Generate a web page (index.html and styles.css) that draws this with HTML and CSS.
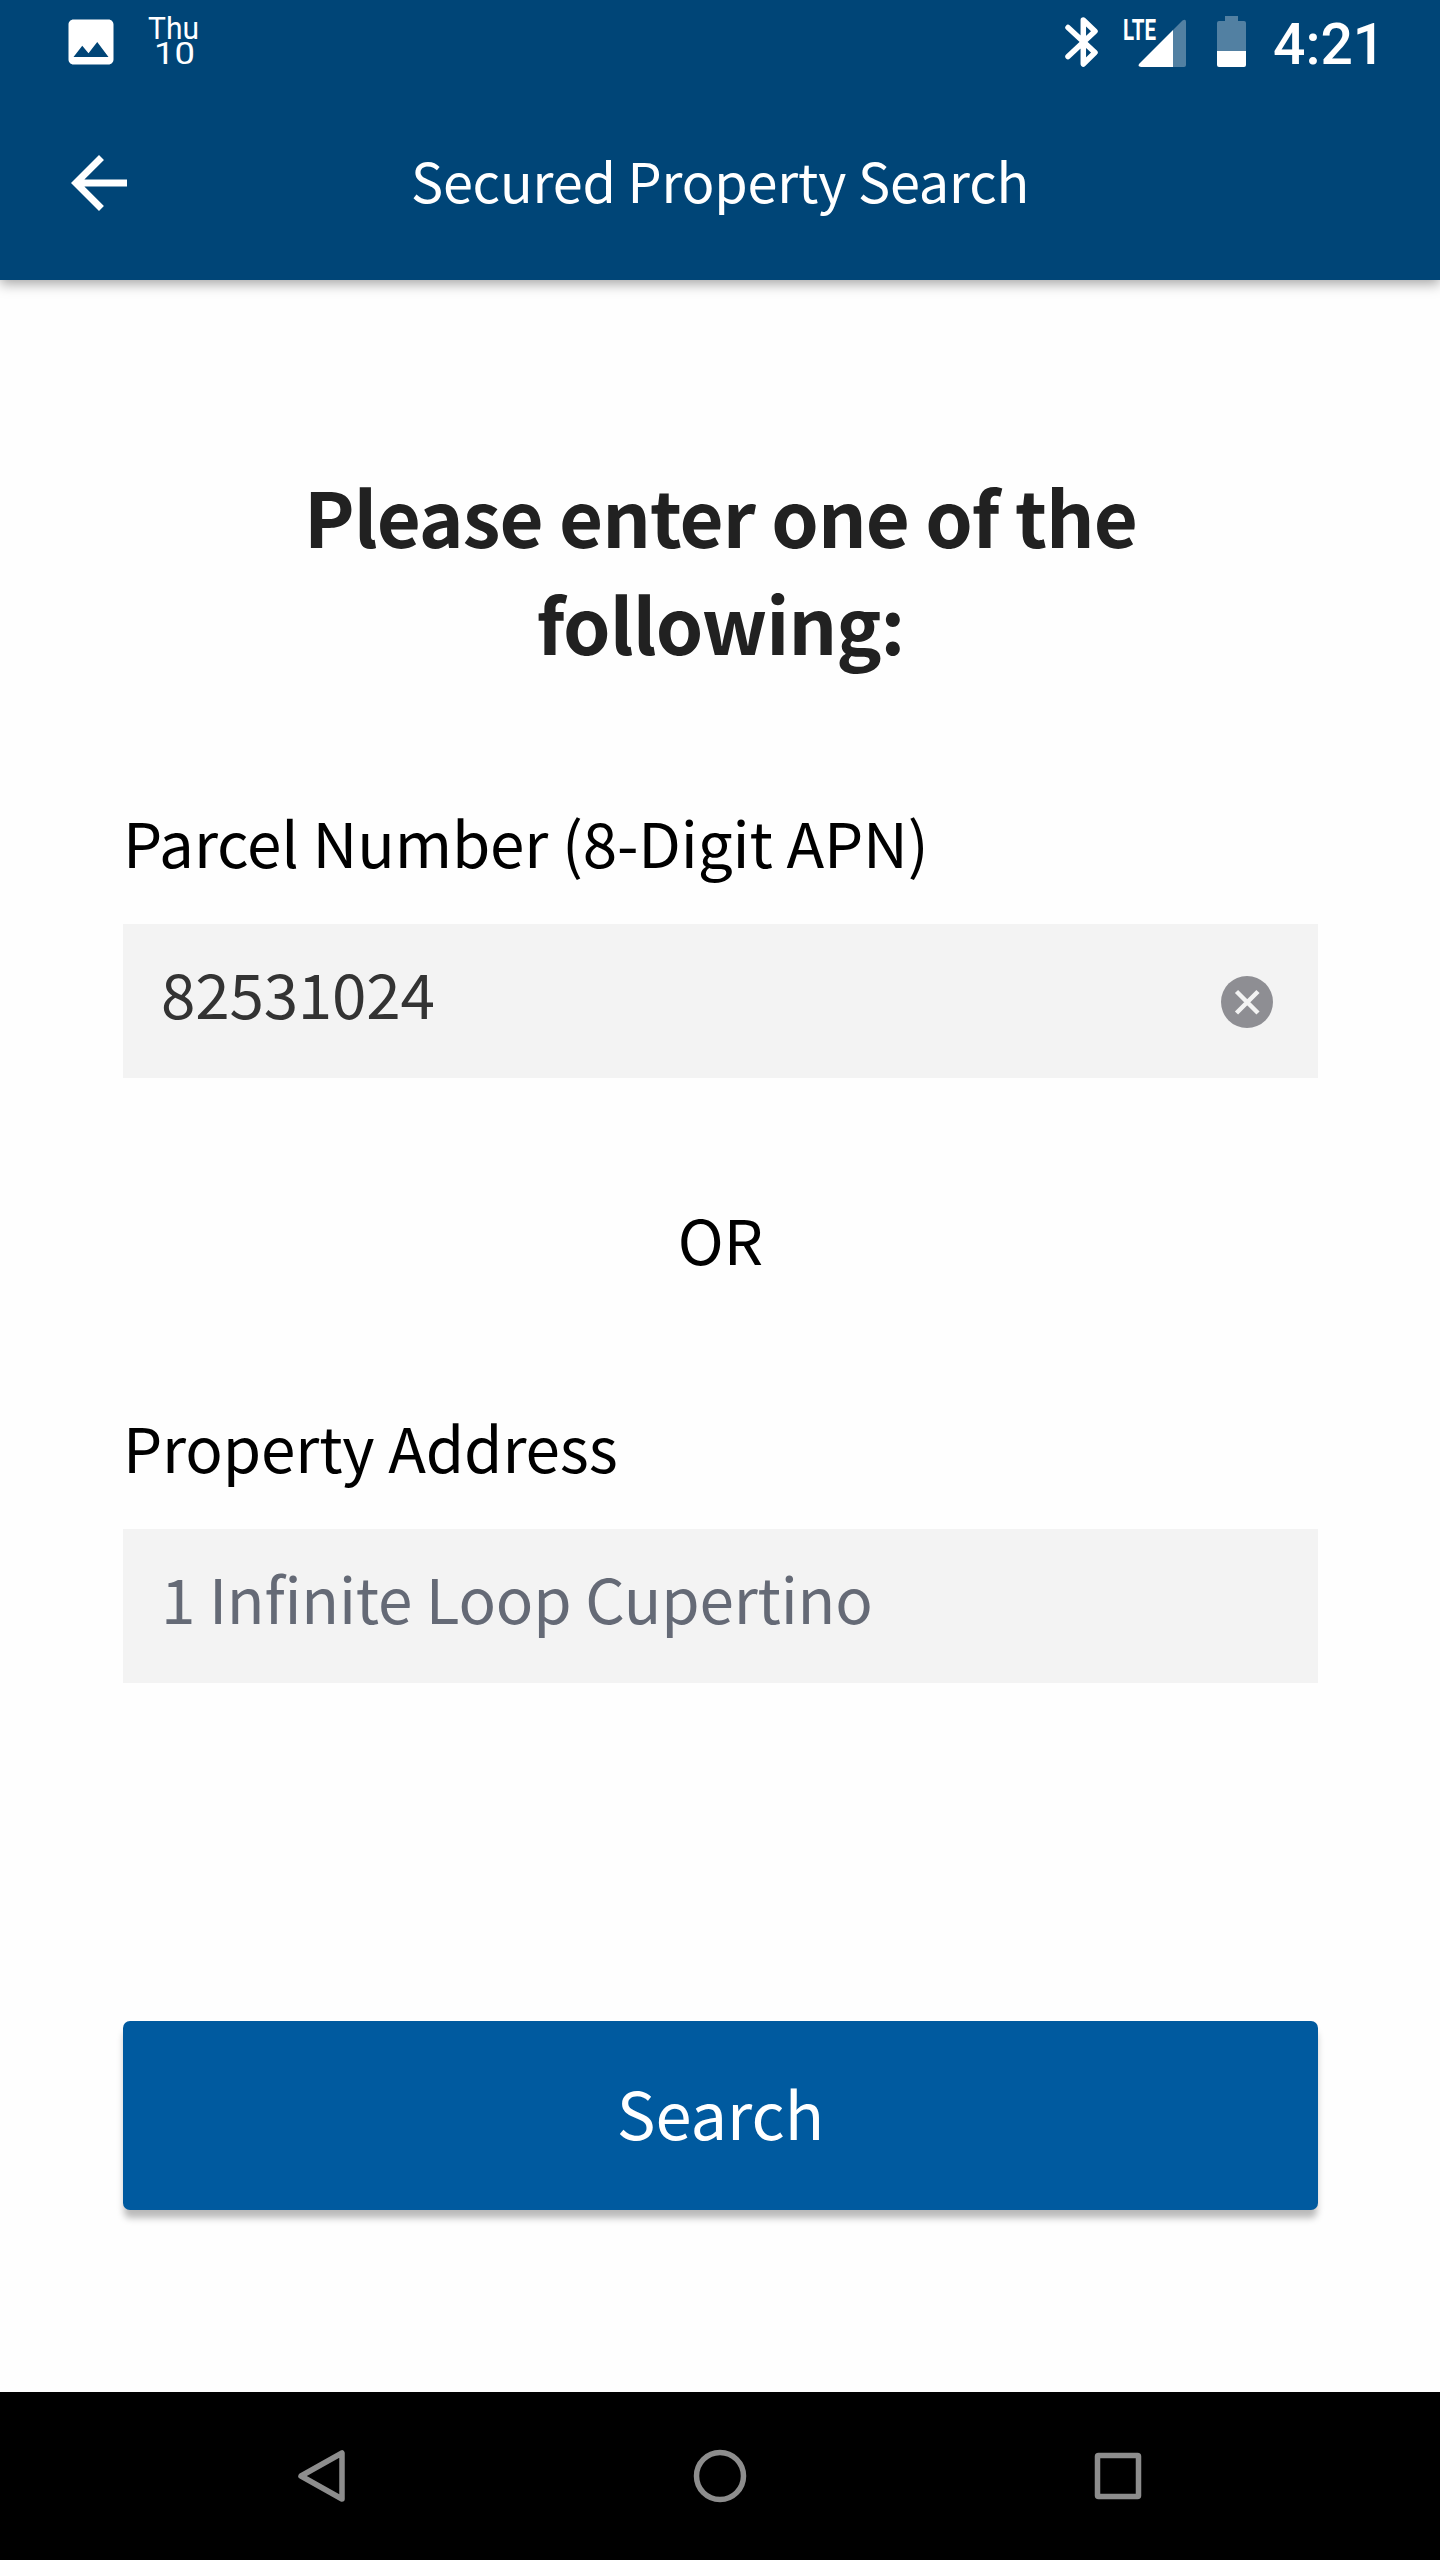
FILE: index.html
```html
<!DOCTYPE html>
<html lang="en">
<head>
  <meta charset="UTF-8">
  <title>Secured Property Search</title>
  <meta name="viewport" content="width=device-width, initial-scale=1.0">
  <link rel="stylesheet" href="styles.css">
</head>
<body>
  <header class="header">
    <div class="status-bar">
      <svg class="photo-icon" viewBox="0 0 24 24"><path d="M21 19V5c0-1.100-.9-2-2-2H5c-1.100 0-2 .9-2 2v14c0 1.100.9 2 2 2h14c1.100 0 2-.9 2-2zM8.500 13.500l2.500 3.010L14.500 12l4.500 6H5l3.500-4.500z"/></svg>
      <svg class="date" viewBox="0 0 56 84">
        <text x="0" y="38.500" textLength="51" lengthAdjust="spacingAndGlyphs">Thu</text>
        <text x="6" y="64" textLength="41" lengthAdjust="spacingAndGlyphs">10</text>
      </svg>
      <div class="status-right">
        <svg class="bluetooth" viewBox="0 0 34 84"><path d="M4 27.500L31 52.500 19.300 64V20L31 31.200 4 56.500"/></svg>
        <svg class="signal" viewBox="0 0 64 84">
          <text x="0" y="40" textLength="33" lengthAdjust="spacingAndGlyphs">LTE</text>
          <path class="dim" d="M50 30L59.500 20.500Q63 18.500 63 22V65Q63 67 61 67H50Z"/>
          <path d="M50 30V67H18Q14 66.500 16.500 63.500Z"/>
        </svg>
        <svg class="battery" viewBox="0 0 30 84">
          <path class="dim" d="M8 16H21V21H27Q29 21 29 23V51H0V23Q0 21 2 21H8Z"/>
          <path d="M0 51H29V65Q29 67 27 67H2Q0 67 0 65Z"/>
        </svg>
        <span class="time">4:21</span>
      </div>
    </div>
    <div class="app-bar">
      <svg class="back-arrow" viewBox="0 0 24 24"><path d="M20 11H7.830l5.590-5.590L12 4l-8 8 8 8 1.410-1.410L7.830 13H20v-2z"/></svg>
      <div class="title">Secured Property Search</div>
    </div>
  </header>

  <main class="content">
    <h1>Please enter one of the following:</h1>

    <label for="apn">Parcel Number (8-Digit APN)</label>
    <div class="field">
      <input type="text" id="apn" value="82531024">
      <svg class="clear" viewBox="0 0 52 52"><circle cx="26" cy="26" r="26"/><path d="M15.500 15.500L37 37M37 15.500L15.500 37"/></svg>
    </div>

    <div class="or">OR</div>

    <label for="address">Property Address</label>
    <div class="field">
      <input type="text" id="address" placeholder="1 Infinite Loop Cupertino">
    </div>

    <button class="search-btn">Search</button>
  </main>

  <nav class="nav-bar">
    <svg viewBox="0 0 56 56"><path d="M48 5V51L7 28Z"/></svg>
    <svg viewBox="0 0 56 56"><circle cx="28" cy="28" r="23.500"/></svg>
    <svg viewBox="0 0 56 56"><rect x="7.500" y="7.500" width="41" height="41" rx="1"/></svg>
  </nav>
</body>
</html>
```

FILE: styles.css
```css
* {
  box-sizing: border-box;
}
body {
  margin: 0;
  height: 2560px;
  display: flex;
  flex-direction: column;
  background-color: #fefefe;
  font-family: "Noto Sans CJK JP", "Noto Sans", sans-serif;
  color: #000;
}
svg {
  display: block;
  flex-shrink: 0;
}
.header {
  height: 280px;
  background-color: #004577;
  color: white;
  box-shadow: 0 4px 12px rgba(0,0,0,0.35);
}
.status-bar {
  display: flex;
  height: 84px;
  padding: 0 59px 0 61px;
  fill: white;
}
.photo-icon {
  width: 60px;
  height: 60px;
  margin-top: 12px;
}
.date {
  width: 56px;
  height: 84px;
  margin-left: 27px;
  font: 400 31px "Roboto", sans-serif;
}
.status-right {
  display: flex;
  margin-left: auto;
}
.bluetooth {
  width: 34px;
  height: 84px;
  margin-right: 25px;
  fill: none;
  stroke: white;
  stroke-width: 5.5;
  stroke-linecap: round;
  stroke-linejoin: round;
}
.signal {
  width: 64px;
  height: 84px;
  margin-right: 30px;
  font: 700 30px "Roboto", sans-serif;
}
.battery {
  width: 30px;
  height: 84px;
  margin-right: 26px;
}
.dim {
  opacity: 0.32;
}
.time {
  width: 108px;
  font: 500 57px/90px "Roboto", sans-serif;
}
.app-bar {
  display: grid;
  grid-template-columns: 84px 1fr 84px;
  align-items: center;
  height: 196px;
  padding: 2px 57px 0;
}
.back-arrow {
  width: 84px;
  height: 84px;
  fill: white;
}
.title {
  padding-bottom: 7px;
  text-align: center;
  font-size: 54px;
  letter-spacing: -0.2px;
}
.content {
  display: flex;
  flex-direction: column;
  flex: 1;
  padding: 182px 122px 0 123px;
}
h1 {
  margin: 0 0 120px;
  padding: 0 150px;
  text-align: center;
  font-size: 76px;
  font-weight: 600;
  line-height: 107px;
  letter-spacing: -0.95px;
  color: #212121;
}
label {
  margin-bottom: 38px;
  font-size: 62px;
  line-height: 90px;
  letter-spacing: -0.15px;
}
.field {
  display: flex;
  align-items: center;
  height: 154px;
  padding: 0 45px 0 38px;
  background-color: #f3f3f3;
}
.field input {
  flex: 1;
  min-width: 0;
  height: 154px;
  padding: 0 0 18px;
  border: none;
  outline: none;
  background: none;
  font-family: inherit;
  font-size: 62px;
  letter-spacing: -0.2px;
  color: #333;
}
.field input::placeholder {
  color: #656a76;
  opacity: 1;
}
.clear {
  width: 52px;
  height: 52px;
  margin-top: 2px;
  fill: #8e8e93;
  stroke: #f3f3f3;
}
.clear circle {
  stroke: none;
}
.clear path {
  stroke-width: 4.5;
}
.or {
  margin: 115px 0 118px;
  text-align: center;
  font-size: 62px;
  line-height: 90px;
}
.search-btn {
  height: 189px;
  margin-top: 338px;
  padding: 0 0 7px;
  border: none;
  border-radius: 7px;
  background-color: #005a9f;
  box-shadow: 0 9px 7px -1px rgba(0,0,0,0.27);
  font-family: inherit;
  font-size: 65px;
  color: white;
}
.nav-bar {
  display: flex;
  justify-content: space-between;
  align-items: center;
  height: 168px;
  padding: 0 294px;
  background-color: #000;
}
.nav-bar svg {
  width: 56px;
  height: 56px;
  fill: none;
  stroke: #8d8d8d;
  stroke-width: 5.5;
  stroke-linejoin: round;
}
```
